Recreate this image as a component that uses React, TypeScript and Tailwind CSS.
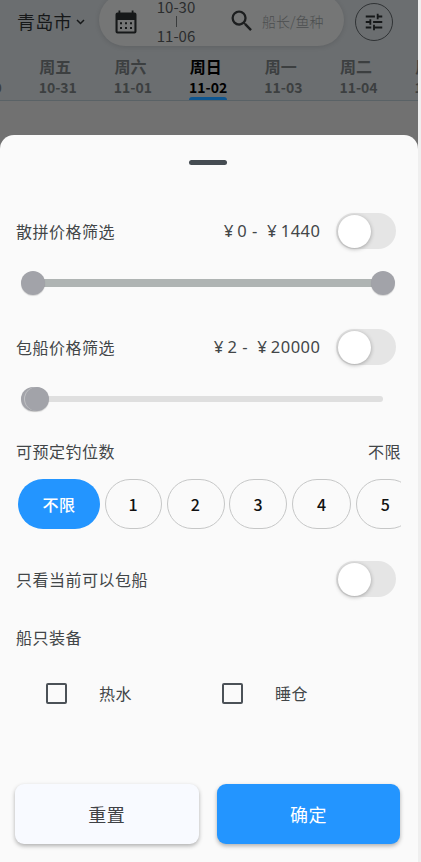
import { useState } from "react";
import { MdSearch, MdTune } from "react-icons/md";
import clsx from "clsx";

const DAYS = [
  { week: "周四", date: "10-30" },
  { week: "周五", date: "10-31" },
  { week: "周六", date: "11-01" },
  { week: "周日", date: "11-02" },
  { week: "周一", date: "11-03" },
  { week: "周二", date: "11-04" },
  { week: "周三", date: "11-05" },
];

const SEATS = [
  { label: "不限", width: "w-[82px]" },
  { label: "1", width: "w-[57px]" },
  { label: "2", width: "w-[58px]" },
  { label: "3", width: "w-[58px]" },
  { label: "4", width: "w-[59px]" },
  { label: "5", width: "w-[59px]" },
];

function CalendarIcon() {
  return (
    <svg width="22" height="24" viewBox="0 0 22 24" className="shrink-0">
      <path
        fill="#161819"
        fillRule="evenodd"
        d="M3.500 0.500h1.800v2h11.400v-2h1.800v2h1A2 2 0 0 1 21.500 4.500v17a2 2 0 0 1-2 2h-17a2 2 0 0 1-2-2v-17a2 2 0 0 1 2-2h1zM2.600 10v11.400h16.800V10z"
      />
      <path
        fill="#161819"
        d="M5 12.200h2v2H5zM10 12.200h2v2h-2zM15 12.200h2v2h-2zM5 17h2v2H5zM10 17h2v2h-2zM15 17h2v2h-2z"
      />
    </svg>
  );
}

function SearchHeader() {
  return (
    <div className="flex h-[51px] items-start">
      <div className="flex h-11 w-[99px] shrink-0 items-center gap-1 pl-[17px] text-[18px] tracking-[0.3px] text-[#161819]">
        <span className="-mt-0.5">青岛市</span>
        <svg width="9" height="6" viewBox="0 0 9 6" fill="none">
          <path d="M1 1l3.500 3.500L8 1" stroke="#161819" strokeWidth="1.500" />
        </svg>
      </div>
      <div className="-mt-1.5 flex h-[52px] w-[245px] shrink-0 items-center rounded-full bg-[#757676] pl-4 pt-1 shadow-[0_1px_5px_rgba(0,0,0,0.12)]">
        <CalendarIcon />
        <div className="-mt-0.5 ml-[17px] flex w-11 shrink-0 flex-col items-center whitespace-nowrap text-[15px] leading-[15px] text-[#2b2d2e]">
          <span>10-30</span>
          <span className="mb-px mt-0.5 h-[11px] w-px bg-[#3a3c3d]" />
          <span>11-06</span>
        </div>
        <MdSearch className="-mt-0.5 ml-[30px] size-7 shrink-0 text-[#1c1e1f]" />
        <span className="-mt-px ml-[6px] whitespace-nowrap text-[14px] font-light text-[#4c4e4f]">
          船长/鱼种
        </span>
      </div>
      <div className="ml-[11px] mt-[3px] flex size-[38px] shrink-0 items-center justify-center rounded-full border border-[#303335]">
        <MdTune className="size-[22px] text-[#161819]" />
      </div>
    </div>
  );
}

function DayTabs() {
  return (
    <div className="flex h-[50px] overflow-hidden border-b border-[#5a6266]">
      <div className="-ml-[55px] flex">
        {DAYS.map((day) => {
          const active = day.date === "11-02";
          return (
            <div
              key={day.date}
              className={clsx(
                "relative flex w-[75.200px] shrink-0 flex-col items-center pt-1 font-bold",
                active ? "text-black" : "text-[#3c3f40]",
              )}
            >
              <span className="-ml-[5px] text-[16px] leading-[22px]">{day.week}</span>
              <span className="text-[14px] leading-[21px]">{day.date}</span>
              {active && (
                <span className="absolute bottom-0 h-[3px] w-[38px] rounded-t-sm bg-[#0d5590]" />
              )}
            </div>
          );
        })}
      </div>
    </div>
  );
}

function Toggle() {
  const [on, setOn] = useState(false);
  return (
    <button
      role="switch"
      aria-checked={on}
      onClick={() => setOn(!on)}
      className={clsx(
        "mr-[5px] flex h-9 w-[60px] shrink-0 items-center rounded-full px-[2px]",
        on ? "justify-end bg-[#2395ff]" : "bg-[#e5e5e5]",
      )}
    >
      <span className="size-[33px] rounded-full bg-white shadow-[0_1px_4px_rgba(0,0,0,0.3)]" />
    </button>
  );
}

function Yen() {
  return <span className="inline-block w-[17px] text-center text-[17px]">¥</span>;
}

function PriceRow({ label, min, max }: { label: string; min: number; max: number }) {
  return (
    <div className="flex h-12 items-center">
      <span className="flex-1">{label}</span>
      <span className="mr-[15.500px] whitespace-nowrap font-['Noto_Sans',sans-serif] text-[16.500px]">
        <Yen />
        {min} <span className="mr-px">-</span> <Yen />
        {max}
      </span>
      <Toggle />
    </div>
  );
}

function RangeSlider({ end, full }: { end: number; full?: boolean }) {
  return (
    <div className="relative mt-1 flex h-12 items-center pl-[17px] pr-[18px]">
      <div
        className={clsx("w-full rounded-full", full ? "h-2 bg-[#afb4b3]" : "h-1.5 bg-[#dfdfdf]")}
      />
      <span className="absolute left-[5px] size-6 rounded-full bg-[#a2a3a9] shadow-[0_1px_1px_rgba(0,0,0,0.15)]" />
      <span
        className={clsx(
          "absolute size-6 rounded-full bg-[#a2a3a9]",
          full
            ? "shadow-[0_1px_1px_rgba(0,0,0,0.15)]"
            : "shadow-[-1px_0_0_#bfc0c3,0_1px_1px_rgba(0,0,0,0.15)]",
        )}
        style={{ left: end }}
      />
    </div>
  );
}

function GearOption({ label }: { label: string }) {
  return (
    <label className="flex w-44 items-center pl-[30px]">
      <span className="size-[21px] rounded-[2px] border-2 border-[#4b5157]" />
      <span className="ml-8">{label}</span>
    </label>
  );
}

export default function App() {
  const [seat, setSeat] = useState("不限");

  return (
    <div className="h-[862px] w-[421px] overflow-hidden bg-[#efefef] font-['Noto_Sans_CJK_SC',sans-serif]">
      <div className="flex h-full w-[418px] flex-col overflow-hidden bg-[#717171]">
        <div className="h-[101px] shrink-0 bg-[#6b6e70]">
          <SearchHeader />
          <DayTabs />
        </div>

        <div className="mt-[33.500px] flex-1 rounded-t-[14px] bg-[#fafafa] pl-4 pr-[17px] text-[16px] leading-6 tracking-[0.5px] text-[#424648]">
          <div className="ml-[173px] pt-[25.500px]">
            <div className="h-[5px] w-[38px] rounded-full bg-[#454c52]" />
          </div>

          <div className="mt-[42px]">
            <PriceRow label="散拼价格筛选" min={0} max={1440} />
            <RangeSlider end={355} full />
          </div>
          <div className="mt-4">
            <PriceRow label="包船价格筛选" min={2} max={20000} />
            <RangeSlider end={8.5} />
          </div>

          <div className="mt-4 flex justify-between">
            <span>可预定钓位数</span>
            <span>不限</span>
          </div>
          <div className="mt-4 flex gap-[4.800px] overflow-hidden pl-0.5">
            {SEATS.map(({ label, width }) => (
              <button
                key={label}
                onClick={() => setSeat(label)}
                className={clsx(
                  "h-[50px] shrink-0 rounded-[25px] font-medium",
                  width,
                  seat === label ? "bg-[#2395ff] text-white" : "border border-[#c6c7c7] text-[#111]",
                )}
              >
                {label}
              </button>
            ))}
          </div>

          <div className="mt-[26px] flex h-12 items-center justify-between">
            <span>只看当前可以包船</span>
            <Toggle />
          </div>

          <div className="mt-[22px]">船只装备</div>
          <div className="mt-5 flex h-12 items-center">
            <GearOption label="热水" />
            <GearOption label="睡仓" />
          </div>

          <div className="-ml-px mt-[67px] flex gap-[18.500px] text-[18px]">
            <button className="h-[59.500px] w-[183.500px] shrink-0 rounded-[9px] bg-[#f8faff] text-[#3f4145] shadow-[0_2px_4px_rgba(0,0,0,0.3)]">
              重置
            </button>
            <button className="h-[59.500px] w-[183px] shrink-0 rounded-[9px] bg-[#2395ff] text-white shadow-[0_2px_4px_rgba(0,0,0,0.3)]">
              确定
            </button>
          </div>
        </div>
      </div>
    </div>
  );
}
